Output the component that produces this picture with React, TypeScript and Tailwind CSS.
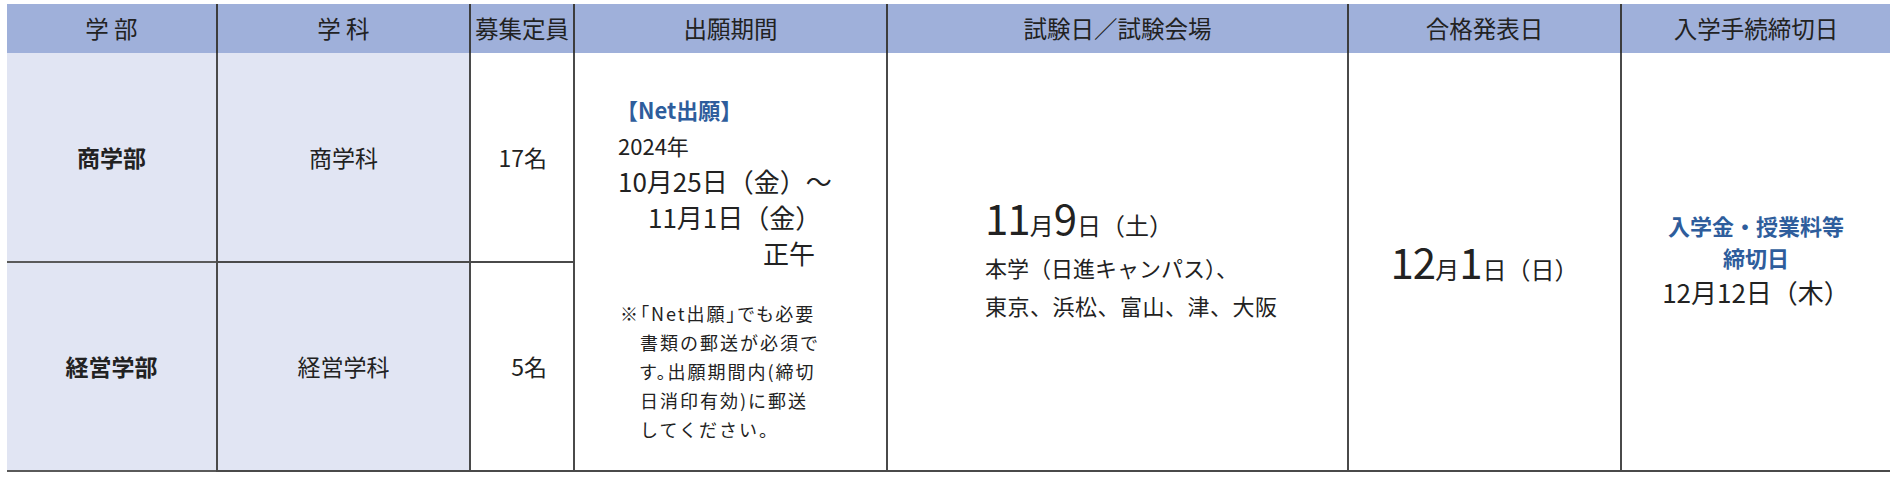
import React from 'react';

const font = "font-['Noto_Sans_CJK_JP','Noto_Sans',sans-serif]";

const headers = ['学 部', '学 科', '募集定員', '出願期間', '試験日／試験会場', '合格発表日', '入学手続締切日'];

export default function App() {
  return (
    <div className={`min-h-[479px] w-[1900px] bg-white pl-[7px] pt-[4px] text-[#222] ${font}`}>
      <div className="grid grid-cols-[209px_253px_104px_313px_461px_273px_270px] grid-rows-[49px_210px_209px]">
        {/* header */}
        {headers.map((h, i) => (
          <div
            key={h}
            className={`flex items-center justify-center whitespace-nowrap bg-[#9fb0da] text-[23.5px] ${i > 0 ? 'border-l-2 border-[#3c3c3c]' : ''}`}
          >
            {h}
          </div>
        ))}

        {/* row 1: 商学部 */}
        <div className="col-start-1 row-start-2 flex items-center justify-center border-b-2 border-[#5a5a5a] bg-[#e1e5f3] text-[23px] font-bold">
          商学部
        </div>
        <div className="col-start-2 row-start-2 flex items-center justify-center border-b-2 border-l-2 border-[#4a4a4a] bg-[#e1e5f3] text-[23px]">
          商学科
        </div>
        <div className="col-start-3 row-start-2 flex items-center justify-center border-b-2 border-l-2 border-[#4a4a4a] text-[23px]">
          <span className="w-[50px] text-right">17名</span>
        </div>

        {/* row 2: 経営学部 */}
        <div className="col-start-1 row-start-3 flex items-center justify-center border-b-2 border-[#5a5a5a] bg-[#e1e5f3] text-[23px] font-bold">
          経営学部
        </div>
        <div className="col-start-2 row-start-3 flex items-center justify-center border-b-2 border-l-2 border-[#4a4a4a] bg-[#e1e5f3] text-[23px]">
          経営学科
        </div>
        <div className="col-start-3 row-start-3 flex items-center justify-center border-b-2 border-l-2 border-[#4a4a4a] text-[23px]">
          <span className="w-[50px] text-right">5名</span>
        </div>

        {/* 出願期間 */}
        <div className="col-start-4 row-span-2 row-start-2 flex flex-col border-b-2 border-l-2 border-[#4a4a4a] pl-[41px] pt-[38px]">
          <div className="whitespace-nowrap text-[22px] font-bold leading-[36px] text-[#2e5d9c]">【Net出願】</div>
          <div className="whitespace-nowrap pl-[2px] text-[22px] leading-[36px]">2024年</div>
          <div className="whitespace-nowrap pl-[2px] text-[26px] leading-[36px]">10月25日（金）～</div>
          <div className="whitespace-nowrap pl-[32px] text-[26px] leading-[36px]">11月1日（金）</div>
          <div className="whitespace-nowrap pl-[147px] text-[26px] leading-[36px]">正午</div>
          <div className="mt-[28px] pl-[4px] text-[18px] leading-[29px] tracking-[2px]">
            <div className="whitespace-nowrap [font-feature-settings:'palt']">※「Net出願」でも必要</div>
            <div className="whitespace-nowrap pl-[20px]">書類の郵送が必須で</div>
            <div className="whitespace-nowrap pl-[20px] [font-feature-settings:'palt']">す。出願期間内(締切</div>
            <div className="whitespace-nowrap pl-[20px]">日消印有効)に郵送</div>
            <div className="whitespace-nowrap pl-[20px]">してください。</div>
          </div>
        </div>

        {/* 試験日／試験会場 */}
        <div className="col-start-5 row-span-2 row-start-2 flex flex-col justify-center border-b-2 border-l-2 border-[#4a4a4a] pb-[6px] pl-[97px]">
          <div className="flex items-baseline whitespace-nowrap leading-[46px]">
            <span className="text-[42px] tracking-[-1px]">11</span>
            <span className="text-[24px]">月</span>
            <span className="text-[42px]">9</span>
            <span className="text-[24px]">日（土）</span>
          </div>
          <div className="whitespace-nowrap text-[22px] leading-[38px]">本学（日進キャンパス）、</div>
          <div className="whitespace-nowrap text-[22px] leading-[38px] tracking-[0.5px]">東京、浜松、富山、津、大阪</div>
        </div>

        {/* 合格発表日 */}
        <div className="col-start-6 row-span-2 row-start-2 flex items-center justify-center border-b-2 border-l-2 border-[#4a4a4a] pb-[2px]">
          <div className="flex items-baseline whitespace-nowrap">
            <span className="text-[42px] tracking-[-1px]">12</span>
            <span className="text-[24px]">月</span>
            <span className="text-[42px]">1</span>
            <span className="text-[24px]">日（日）</span>
          </div>
        </div>

        {/* 入学手続締切日 */}
        <div className="col-start-7 row-span-2 row-start-2 flex flex-col items-center justify-center border-b-2 border-l-2 border-[#4a4a4a] pb-[4px]">
          <div className="whitespace-nowrap text-[22px] font-bold leading-[32px] text-[#2e5d9c]">入学金・授業料等</div>
          <div className="whitespace-nowrap text-[22px] font-bold leading-[32px] text-[#2e5d9c]">締切日</div>
          <div className="whitespace-nowrap text-[26px] leading-[38px]">12月12日（木）</div>
        </div>
      </div>
    </div>
  );
}
